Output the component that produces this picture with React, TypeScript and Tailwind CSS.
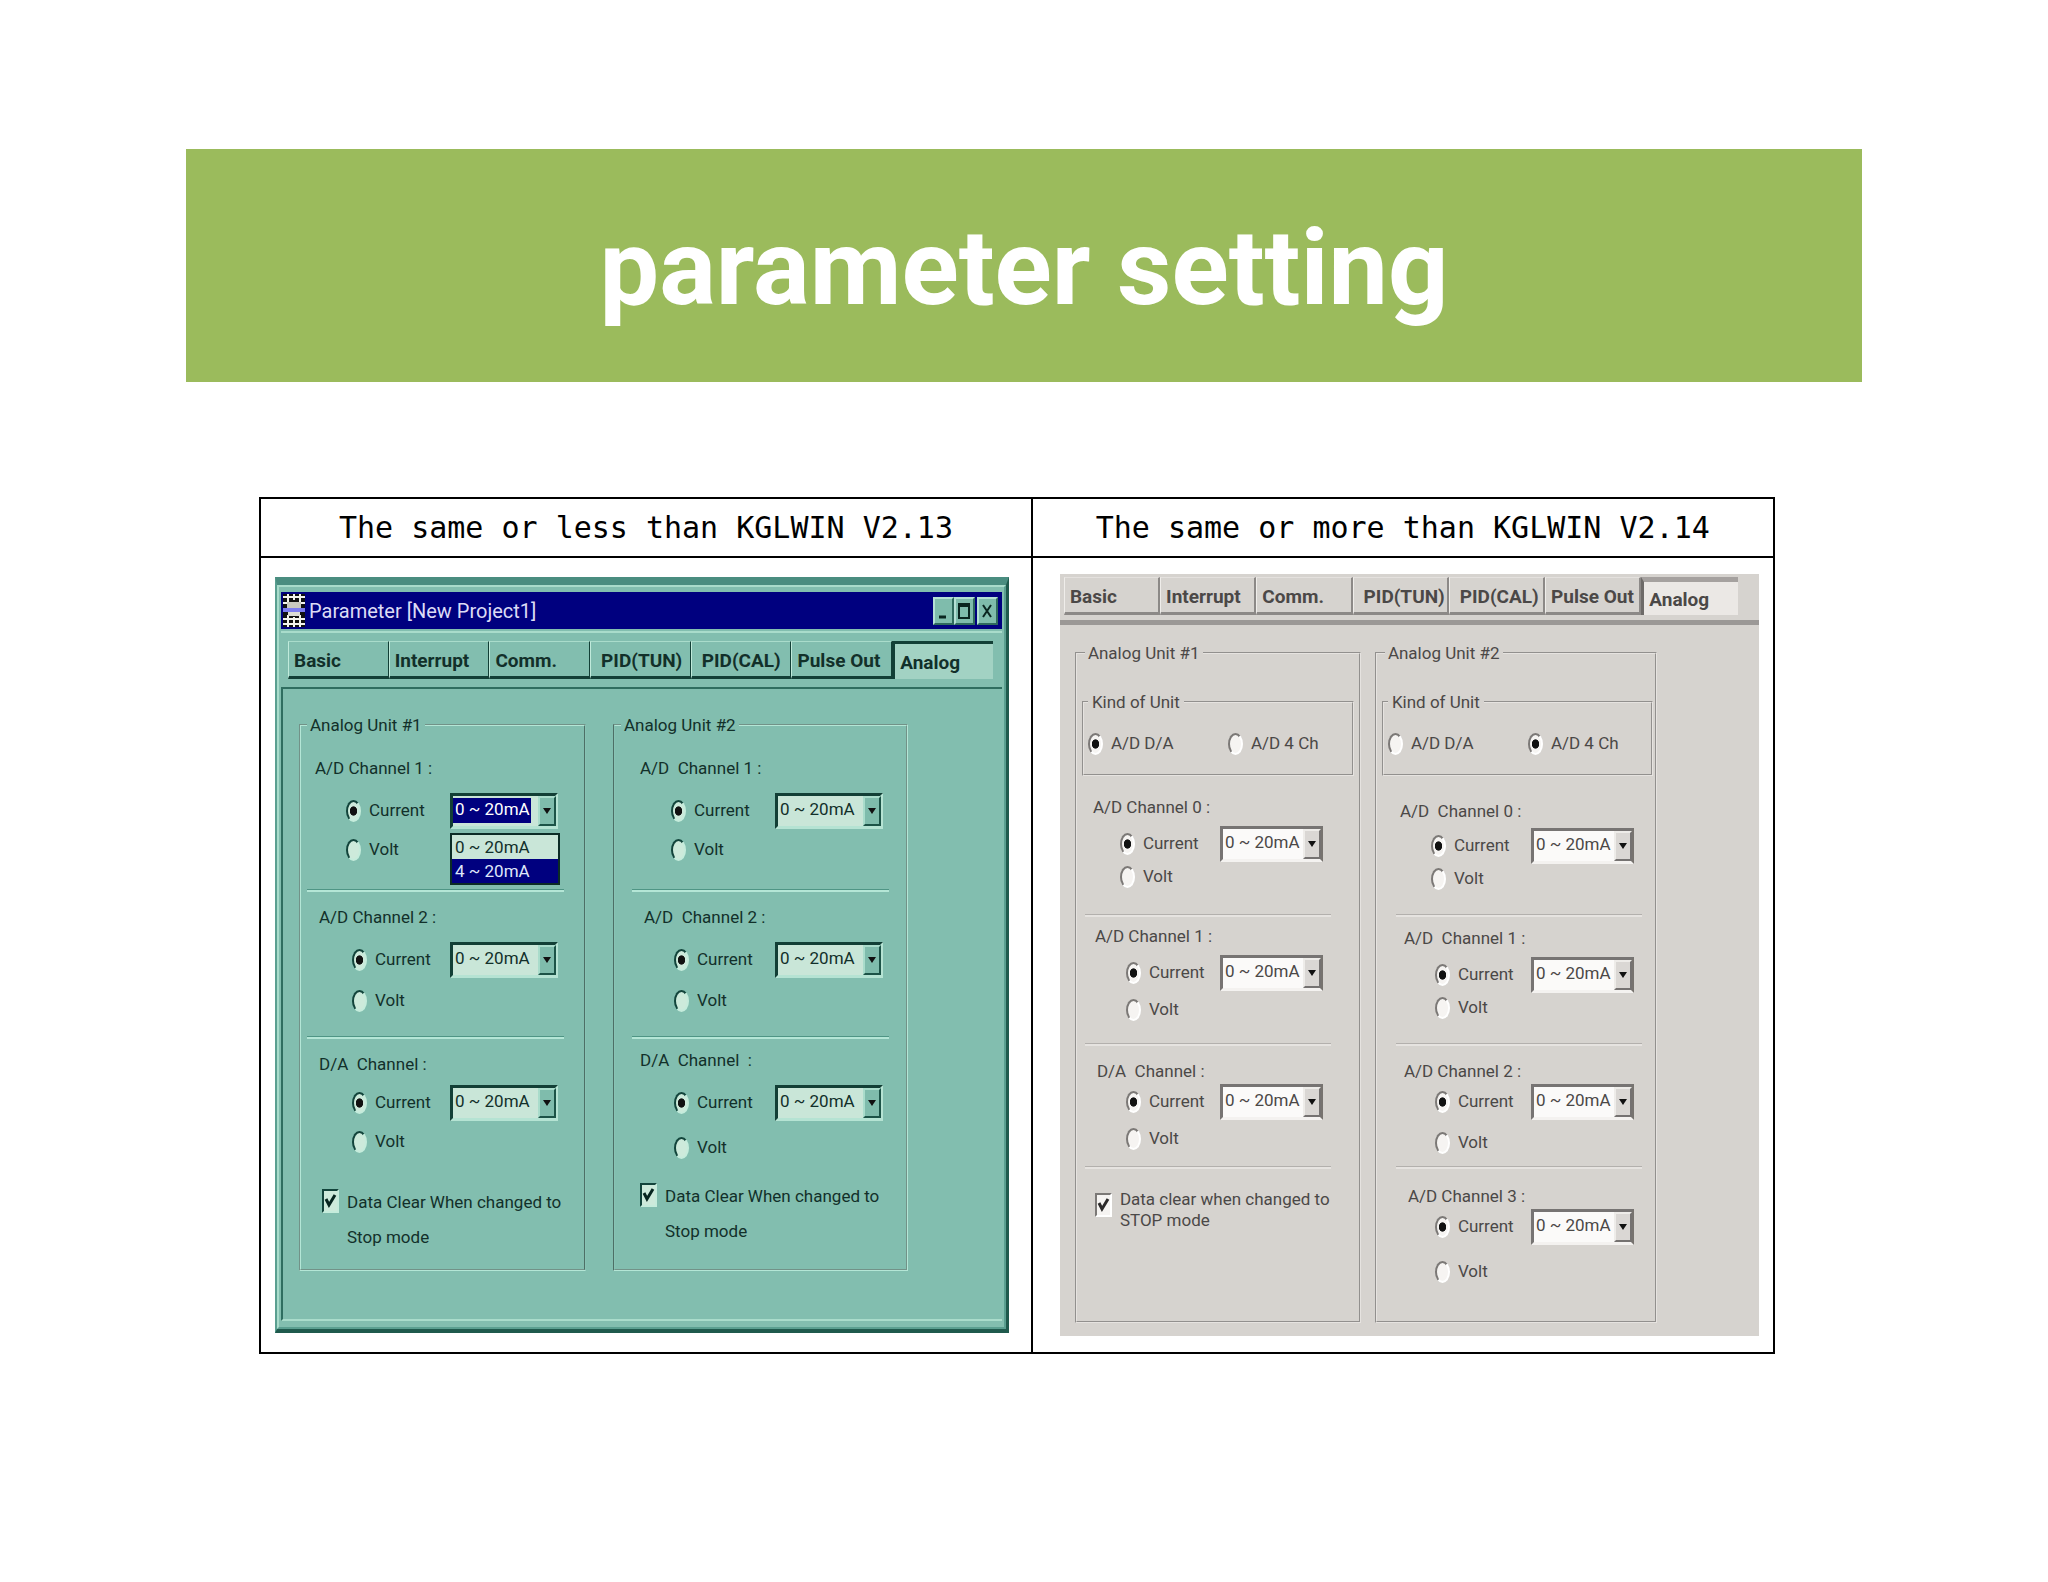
import { useId } from "react";
import clsx from "clsx";

type Theme = {
  radio: string;
  select: string;
  arrow: string;
  check: string;
  tick: string;
  rule: string;
  cols: string;
};

type ChannelProps = {
  theme: Theme;
  title: string;
  top: string;
  titleIndent: string;
  indent: string;
  rowGap: string;
  voltGap: string;
  open?: boolean;
};

const GREEN: Theme = {
  radio:
    "border-t-[#12443b] border-l-[#12443b] border-b-[#c5ecdc] border-r-[#c5ecdc] bg-[#cdeadb]",
  select:
    "bg-[#c9e6d8] border-t-[#123f36] border-l-[#123f36] border-b-[#b5e3d3] border-r-[#b5e3d3]",
  arrow:
    "bg-[#7fbcac] border-t-[#a9dccb] border-l-[#a9dccb] border-b-[#1c5347] border-r-[#1c5347]",
  check:
    "bg-[#cdeadb] border-t-[#12443b] border-l-[#12443b] border-b-[#c5ecdc] border-r-[#c5ecdc]",
  tick: "#06251f",
  rule: "w-[257px] border-t-[#4f9585] border-b-[#b4e6d6]",
  cols: "grid-cols-[143px_108px]",
};

const GRAY: Theme = {
  radio:
    "border-t-[#7b7876] border-l-[#7b7876] border-b-white border-r-white bg-[#f6f4f2]",
  select:
    "bg-[#fbfaf9] border-t-[#777473] border-l-[#777473] border-b-[#f4f2f0] border-r-[#77736f]",
  arrow:
    "bg-[#dad7d4] border-t-[#eeece9] border-l-[#eeece9] border-b-[#757271] border-r-[#757271]",
  check:
    "bg-[#f6f4f2] border-t-[#7b7876] border-l-[#7b7876] border-b-white border-r-white",
  tick: "#2b2929",
  rule: "w-[246px] border-t-[#b3b0ad] border-b-[#e6e3e0]",
  cols: "grid-cols-[135px_103px]",
};

const TABS = ["Basic", "Interrupt", "Comm.", "PID(TUN)", "PID(CAL)", "Pulse Out", "Analog"];

function Radio({
  theme,
  label,
  name,
  checked,
  className,
}: {
  theme: Theme;
  label: string;
  name: string;
  checked?: boolean;
  className?: string;
}) {
  return (
    <label className={clsx("flex items-center gap-2", className)}>
      <input
        type="radio"
        name={name}
        defaultChecked={checked}
        className={clsx(
          "appearance-none shrink-0 w-[15px] h-[22px] rounded-[50%] border-2 checked:bg-[radial-gradient(ellipse_4px_5px_at_center,#111_85%,transparent)]",
          theme.radio
        )}
      />
      {label}
    </label>
  );
}

function Range({ theme, label, open }: { theme: Theme; label: string; open?: boolean }) {
  return (
    <div className="relative h-[36px]">
      <select
        aria-label={label}
        defaultValue="0"
        className={clsx(
          "appearance-none block w-full h-full border-[3px] pl-[2px] pb-[5px] leading-[24px]",
          theme.select,
          open &&
            "text-white bg-[linear-gradient(#00007f,#00007f)] bg-no-repeat bg-[length:78px_25px] bg-[position:0_2px]"
        )}
      >
        <option value="0">0 ~ 20mA</option>
        <option value="4">4 ~ 20mA</option>
      </select>
      <span
        className={clsx(
          "pointer-events-none absolute top-[3px] right-[2px] w-[18px] h-[30px] border-2 flex items-center justify-center",
          theme.arrow
        )}
      >
        <svg width="8" height="8" viewBox="0 0 8 8">
          <path d="M0 1h8L4 7z" fill="#111" />
        </svg>
      </span>
      {open && (
        <ul className="absolute z-10 top-[40px] left-0 w-[110px] border-2 border-[#0b2c26] bg-[#c9e6d8] leading-[24px] text-[#12302a]">
          <li className="pl-[3px]">0 ~ 20mA</li>
          <li className="pl-[3px] bg-[#00007f] text-[#dfe6fa]">4 ~ 20mA</li>
        </ul>
      )}
    </div>
  );
}

function Channel(p: ChannelProps) {
  const name = useId();
  return (
    <div role="group" aria-label={p.title} className={p.top}>
      <div className={clsx("h-[26px] leading-[26px] whitespace-pre", p.titleIndent)}>{p.title}</div>
      <div className={clsx("grid items-center", p.theme.cols, p.rowGap)}>
        <Radio theme={p.theme} name={name} label="Current" checked className={p.indent} />
        <Range theme={p.theme} label={p.title} open={p.open} />
      </div>
      <Radio
        theme={p.theme}
        name={name}
        label="Volt"
        className={clsx("h-[30px]", p.indent, p.voltGap)}
      />
    </div>
  );
}

function Rule({ theme, className }: { theme: Theme; className: string }) {
  return <hr className={clsx("h-[3px] border-t border-b-2", theme.rule, className)} />;
}

function DataClear({
  theme,
  first,
  second,
  className,
}: {
  theme: Theme;
  first: string;
  second: string;
  className: string;
}) {
  return (
    <label className={clsx("flex items-start gap-2 whitespace-nowrap", className)}>
      <span className="relative mt-1 w-[17px] h-[24px] shrink-0">
        <input
          type="checkbox"
          defaultChecked
          className={clsx("appearance-none block w-full h-full border-2", theme.check)}
        />
        <svg
          className="pointer-events-none absolute inset-0"
          width="17"
          height="24"
          viewBox="0 0 17 24"
        >
          <path d="M4 10l3 6 6-10" fill="none" stroke={theme.tick} strokeWidth="3" />
        </svg>
      </span>
      <span>
        {first}
        <br />
        {second}
      </span>
    </label>
  );
}

function KindOfUnit({ fourCh, className }: { fourCh?: boolean; className: string }) {
  const name = useId();
  return (
    <fieldset
      className={clsx("mt-[25px] border-2 border-[#e6e3e0] [border-style:groove]", className)}
    >
      <legend className="ml-1 px-1 h-6 leading-6">Kind of Unit</legend>
      <div className="flex items-center h-[60px] pl-1">
        <Radio theme={GRAY} name={name} label="A/D D/A" checked={!fourCh} className="w-[140px]" />
        <Radio theme={GRAY} name={name} label="A/D 4 Ch" checked={fourCh} />
      </div>
    </fieldset>
  );
}

function ProjectIcon() {
  return (
    <svg width="22" height="33" viewBox="0 0 22 33">
      <rect width="22" height="33" fill="#111" />
      <path
        d="M0 3h22M0 9h22M0 25h22M0 30h22M5 0v12M11 0v6M17 0v12M5 21v12M11 23v10M17 21v12"
        stroke="#f4f4ee"
        strokeWidth="2"
        fill="none"
      />
      <rect x="4" y="8" width="14" height="6" fill="#c9c9c0" />
      <rect y="14" width="22" height="4" fill="#7c7cf0" />
      <rect x="5" y="18" width="12" height="4" fill="#dcdcd4" />
    </svg>
  );
}

const winButton =
  "flex items-center justify-center w-[21px] h-[28px] bg-[#7fbcac] border-2 border-t-[#b4e0d4] border-l-[#b4e0d4] border-b-[#2f6a5d] border-r-[#2f6a5d]";

function TitleBar() {
  return (
    <div className="flex items-center h-[37px] pl-[2px] pr-1 bg-[#00007f]">
      <ProjectIcon />
      <span className="ml-1 mr-auto text-[20px] leading-[30px] text-[#dcdcf6]">
        Parameter [New Project1]
      </span>
      <button aria-label="Minimize" className={winButton}>
        <svg width="14" height="18" viewBox="0 0 14 18">
          <path d="M3 15h7" stroke="#0a2620" strokeWidth="3" />
        </svg>
      </button>
      <button aria-label="Maximize" className={winButton}>
        <svg width="14" height="18" viewBox="0 0 14 18">
          <path d="M2 2v14h10V2" fill="none" stroke="#0a2620" strokeWidth="2" />
          <path d="M1 3h12" stroke="#0a2620" strokeWidth="4" />
        </svg>
      </button>
      <button aria-label="Close" className={clsx(winButton, "ml-[2px]")}>
        <svg width="14" height="18" viewBox="0 0 14 18">
          <path d="M3 3l8 12M11 3L3 15" stroke="#0a2620" strokeWidth="2" />
        </svg>
      </button>
    </div>
  );
}

function GreenDialog() {
  return (
    <div className="ml-[14px] mr-[22px] mt-[19px] mb-[19px] bg-[#82beaf] text-[17px] text-[#12302a] border-t-[8px] border-l-2 border-r-[3px] border-b-4 border-t-[#4a8d80] border-l-[#5a9f90] border-r-[#1f5a4d] border-b-[#1f5a4d]">
      <div className="border-2 border-t-[#a9dccb] border-l-[#a9dccb] border-b-[#5a9f90] border-r-[#5a9f90] px-[2px] pt-[5px] pb-[6px]">
        <TitleBar />
        <div className="mt-[2px] h-[2px] bg-[#a9dccb]" />
        <div role="tablist" className="mt-2 ml-[7px] mr-[9px] grid grid-cols-7 h-[38px] text-[19px] font-bold">
          {TABS.map((t) => (
            <button
              key={t}
              role="tab"
              aria-selected={t === "Analog"}
              className={clsx(
                "text-left whitespace-nowrap pt-1",
                t.startsWith("PID") ? "pl-[10px]" : "pl-[5px]",
                t === "Analog"
                  ? "bg-[#a2d2c3] border-t-[3px] border-l-[3px] border-[#123f36]"
                  : "border-l border-t border-r border-b-[3px] border-t-[#a9dccb] border-l-[#c0eadb] border-r-[#123f36] border-b-[#123f36]"
              )}
            >
              {t}
            </button>
          ))}
        </div>
        <div className="mt-2 flex gap-[27px] pl-[16px] pt-[24px] pb-[48px] border-t-2 border-l-2 border-b-2 border-t-[#2f6e60] border-l-[#2f6e60] border-b-[#a9dccb]">
          <fieldset className="w-[287px] min-w-0 border-2 [border-style:groove] border-[#b4e6d6] border-r-[#88c3b4] pb-[14px]">
            <legend className="ml-[6px] px-[3px] h-6 leading-6">Analog Unit #1</legend>
            <div className="pl-[6px]">
              <Channel theme={GREEN} title="A/D Channel 1 :" top="pt-[18px]" titleIndent="pl-2" indent="pl-[39px]" rowGap="mt-3" voltGap="mt-[6px]" open />
              <Rule theme={GREEN} className="mt-6" />
              <Channel theme={GREEN} title="A/D Channel 2 :" top="pt-3" titleIndent="pl-3" indent="pl-[45px]" rowGap="mt-3" voltGap="mt-2" />
              <Rule theme={GREEN} className="mt-5" />
              <Channel theme={GREEN} title="D/A  Channel :" top="pt-3" titleIndent="pl-3" indent="pl-[45px]" rowGap="mt-2" voltGap="mt-[6px]" />
              <DataClear theme={GREEN} first="Data Clear When changed to" second="Stop mode" className="pl-[15px] mt-7 leading-[35px]" />
            </div>
          </fieldset>
          <fieldset className="w-[295px] min-w-0 border-2 [border-style:groove] border-[#b4e6d6] border-l-[#88c3b4] pb-[14px]">
            <legend className="ml-[6px] px-[3px] h-6 leading-6">Analog Unit #2</legend>
            <div className="pl-[17px]">
              <Channel theme={GREEN} title="A/D  Channel 1 :" top="pt-[18px]" titleIndent="pl-2" indent="pl-[39px]" rowGap="mt-3" voltGap="mt-[6px]" />
              <Rule theme={GREEN} className="mt-6" />
              <Channel theme={GREEN} title="A/D  Channel 2 :" top="pt-3" titleIndent="pl-3" indent="pl-[42px]" rowGap="mt-3" voltGap="mt-2" />
              <Rule theme={GREEN} className="mt-5" />
              <Channel theme={GREEN} title="D/A  Channel  :" top="pt-2" titleIndent="pl-2" indent="pl-[42px]" rowGap="mt-3" voltGap="mt-3" />
              <DataClear theme={GREEN} first="Data Clear When changed to" second="Stop mode" className="pl-2 mt-4 leading-[35px]" />
            </div>
          </fieldset>
        </div>
      </div>
    </div>
  );
}

function GrayDialog() {
  return (
    <div className="ml-[27px] mr-[14px] mt-4 pb-[13px] bg-[#d6d3cf] text-[17px] text-[#4b4847]">
      <div role="tablist" className="pt-[3px] ml-1 mr-[21px] grid grid-cols-7 h-[38px] text-[19px] font-bold">
        {TABS.map((t) => (
          <button
            key={t}
            role="tab"
            aria-selected={t === "Analog"}
            className={clsx(
              "text-left whitespace-nowrap pt-1",
              t.startsWith("PID") ? "pl-[10px]" : "pl-[5px]",
              t === "Analog"
                ? "bg-[#ebe8e5] border-t-[5px] border-l-[3px] border-t-[#a5a19f] border-l-[#6d6a68]"
                : "border-l border-t border-r-2 border-b-[3px] border-t-[#e4e1de] border-l-[#efedea] border-r-[#8c8987] border-b-[#8c8987]"
            )}
          >
            {t}
          </button>
        ))}
      </div>
      <div className="mt-2 h-[5px] bg-[#9b9896]" />
      <div className="mt-4 ml-[15px] flex gap-[14px]">
        <fieldset className="w-[286px] min-w-0 border-2 [border-style:groove] border-[#e6e3e0]">
          <legend className="ml-2 px-[3px] h-6 leading-6">Analog Unit #1</legend>
          <KindOfUnit className="ml-[5px] mr-[5px]" />
          <div className="pl-2">
            <Channel theme={GRAY} title="A/D Channel 0 :" top="pt-[18px]" titleIndent="pl-2" indent="pl-[35px]" rowGap="mt-[6px]" voltGap="mt-0" />
            <Rule theme={GRAY} className="mt-[22px]" />
            <Channel theme={GRAY} title="A/D Channel 1 :" top="pt-[6px]" titleIndent="pl-[10px]" indent="pl-[41px]" rowGap="mt-[6px]" voltGap="mt-1" />
            <Rule theme={GRAY} className="mt-[18px]" />
            <Channel theme={GRAY} title="D/A  Channel :" top="pt-3" titleIndent="pl-3" indent="pl-[41px]" rowGap="mt-0" voltGap="mt-1" />
            <Rule theme={GRAY} className="mt-3" />
            <DataClear theme={GRAY} first="Data clear when changed to" second="STOP mode" className="pl-[10px] mt-5 leading-[21px]" />
          </div>
        </fieldset>
        <fieldset className="w-[282px] min-w-0 border-2 [border-style:groove] border-[#e6e3e0] pb-[34px]">
          <legend className="ml-2 px-[3px] h-6 leading-6">Analog Unit #2</legend>
          <KindOfUnit fourCh className="ml-[5px] mr-[2px]" />
          <div className="pl-[19px]">
            <Channel theme={GRAY} title="A/D  Channel 0 :" top="pt-[22px]" titleIndent="pl-1" indent="pl-[35px]" rowGap="mt-1" voltGap="mt-0" />
            <Rule theme={GRAY} className="mt-5" />
            <Channel theme={GRAY} title="A/D  Channel 1 :" top="pt-2" titleIndent="pl-2" indent="pl-[39px]" rowGap="mt-[6px]" voltGap="mt-0" />
            <Rule theme={GRAY} className="mt-5" />
            <Channel theme={GRAY} title="A/D Channel 2 :" top="pt-3" titleIndent="pl-2" indent="pl-[39px]" rowGap="mt-0" voltGap="mt-2" />
            <Rule theme={GRAY} className="mt-2" />
            <Channel theme={GRAY} title="A/D Channel 3 :" top="pt-[14px]" titleIndent="pl-3" indent="pl-[39px]" rowGap="mt-0" voltGap="mt-3" />
          </div>
        </fieldset>
      </div>
    </div>
  );
}

export default function App() {
  return (
    <main className="min-h-screen bg-white pt-[149px] pb-[100px] font-['Roboto','Liberation_Sans',sans-serif]">
      <h1 className="mx-[186px] h-[233px] pt-1 flex items-center justify-center bg-[#9bbb5c] text-white font-bold text-[106px] leading-none">
        parameter setting
      </h1>

      <table className="mt-[115px] ml-[259px] w-[74%] table-fixed border-collapse text-black">
        <colgroup>
          <col className="w-[51%]" />
          <col />
        </colgroup>
        <thead>
          <tr className="h-[59px] font-['DejaVu_Sans_Mono',monospace] text-[30px]">
            <th className="border-2 border-black p-0 font-normal whitespace-nowrap">
              The same or less than KGLWIN V2.13
            </th>
            <th className="border-2 border-black p-0 font-normal whitespace-nowrap">
              The same or more than KGLWIN V2.14
            </th>
          </tr>
        </thead>
        <tbody>
          <tr>
            <td className="border-2 border-black p-0 align-top">
              <GreenDialog />
            </td>
            <td className="border-2 border-black p-0 align-top">
              <GrayDialog />
            </td>
          </tr>
        </tbody>
      </table>
    </main>
  );
}
